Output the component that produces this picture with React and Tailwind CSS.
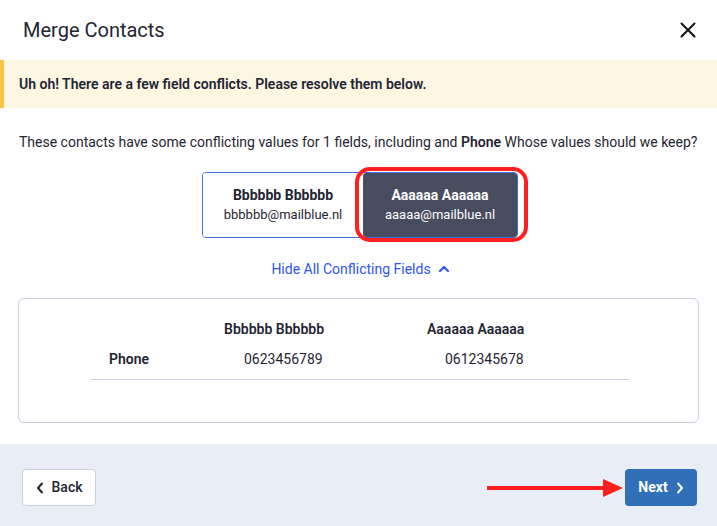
import React, { useState } from "react";

const font = { fontFamily: '"Roboto", "Liberation Sans", sans-serif' };

const ChevronUp = () => (
  <svg width="12" height="12" viewBox="0 0 12 12" className="ml-[7px]">
    <path d="M2 8 L6 4 L10 8" fill="none" stroke="currentColor" strokeWidth="2.2" strokeLinecap="round" strokeLinejoin="round" />
  </svg>
);

const ChevronSide = ({ dir = "left" }) => (
  <svg width="8" height="12" viewBox="0 0 8 12">
    <path
      d={dir === "left" ? "M6 1.5 L2 6 L6 10.5" : "M2 1.5 L6 6 L2 10.5"}
      fill="none"
      stroke="currentColor"
      strokeWidth="2"
      strokeLinecap="round"
      strokeLinejoin="round"
    />
  </svg>
);

const App = () => {
  const [keep, setKeep] = useState("a");

  return (
    <div className="w-[717px] h-[526px] flex flex-col bg-white text-[#1f2532]" style={font}>
      {/* header */}
      <div className="h-[60px] flex items-center justify-between pl-[23px] pr-[19px] shrink-0">
        <h2 className="text-[20px] leading-[24px]">Merge Contacts</h2>
        <button className="w-[20px] h-[20px] flex items-center justify-center">
          <svg width="16" height="16" viewBox="0 0 16 16">
            <path d="M1.5 1.5 L14.5 14.5 M14.5 1.5 L1.5 14.5" stroke="#111" strokeWidth="2" strokeLinecap="round" />
          </svg>
        </button>
      </div>

      {/* warning */}
      <div className="h-[48px] shrink-0 bg-[#fdf6e3] border-l-[4px] border-[#fbc543] pl-[15px] flex items-center">
        <p className="text-[14px] font-semibold">Uh oh! There are a few field conflicts. Please resolve them below.</p>
      </div>

      {/* body */}
      <div className="flex-1 px-[18px] pt-[24px] flex flex-col">
        <p className="text-[14px] leading-[20px] pl-[1px]">
          These contacts have some conflicting values for 1 fields, including and <b className="font-semibold">Phone</b> Whose values should we keep?
        </p>

        <div className="mt-[20px] flex w-[316px] h-[66px] border border-[#3e6de6] rounded-[4px] ml-[184px]">
          <button
            onClick={() => setKeep("b")}
            className={`w-[160px] flex flex-col items-center justify-center rounded-[3px] ${keep === "b" ? "bg-[#474c5f] text-white" : "bg-white"}`}
          >
            <span className="text-[14px] font-bold leading-[20px]">Bbbbbb Bbbbbb</span>
            <span className="text-[13px] leading-[20px]">bbbbbb@mailblue.nl</span>
          </button>
          <div className="relative flex-1 flex">
            <button
              onClick={() => setKeep("a")}
              className={`flex-1 flex flex-col items-center justify-center rounded-[3px] ${keep === "a" ? "bg-[#474c5f] text-white" : "bg-white"}`}
            >
              <span className="text-[14px] font-bold leading-[20px]">Aaaaaa Aaaaaa</span>
              <span className="text-[13px] leading-[20px]">aaaaa@mailblue.nl</span>
            </button>
            <div className="absolute -left-[8px] -right-[11px] -top-[6px] -bottom-[5px] border-[4px] border-[#ff1f1f] rounded-[15px] pointer-events-none" />
          </div>
        </div>

        <button className="mt-[21px] mx-auto flex items-center text-[14px] text-[#2f55f5] leading-[20px] pl-[4px]">
          Hide All Conflicting Fields
          <ChevronUp />
        </button>

        <div className="mt-[19px] h-[125px] border border-[#c9cfe0] rounded-[6px] pt-[20px]">
          <div className="ml-[71px] w-[540px] text-[14px] leading-[20px]">
            <div className="grid grid-cols-[134px_203px_203px]">
              <span />
              <span className="font-semibold">Bbbbbb Bbbbbb</span>
              <span className="font-semibold">Aaaaaa Aaaaaa</span>
            </div>
            <div className="grid grid-cols-[134px_203px_203px] mt-[10px] pb-[10px] border-b border-[#c9cfe0]">
              <span className="pl-[19px] font-semibold">Phone</span>
              <span className="pl-[20px]">0623456789</span>
              <span className="pl-[18px]">0612345678</span>
            </div>
          </div>
        </div>
      </div>

      {/* footer */}
      <div className="h-[82px] shrink-0 bg-[#e9eef6] pl-[22px] pr-[20px] pt-[25px] flex items-start justify-between relative">
        <button className="h-[37px] w-[74px] bg-white border border-[#c9cfe0] rounded-[4px] flex items-center justify-center gap-[8px] text-[14px] font-medium">
          <ChevronSide dir="left" />
          Back
        </button>
        <svg className="absolute left-[487px] top-[34px]" width="136" height="20" viewBox="0 0 136 20">
          <rect x="0" y="8" width="118" height="4" fill="#ff1f1f" />
          <path d="M116 1 L136 10 L116 19 Z" fill="#ff1f1f" />
        </svg>
        <button className="h-[37px] w-[72px] bg-[#3170b8] text-white rounded-[4px] flex items-center justify-center gap-[8px] text-[14px] font-bold">
          Next
          <ChevronSide dir="right" />
        </button>
      </div>
    </div>
  );
};

export default App;
